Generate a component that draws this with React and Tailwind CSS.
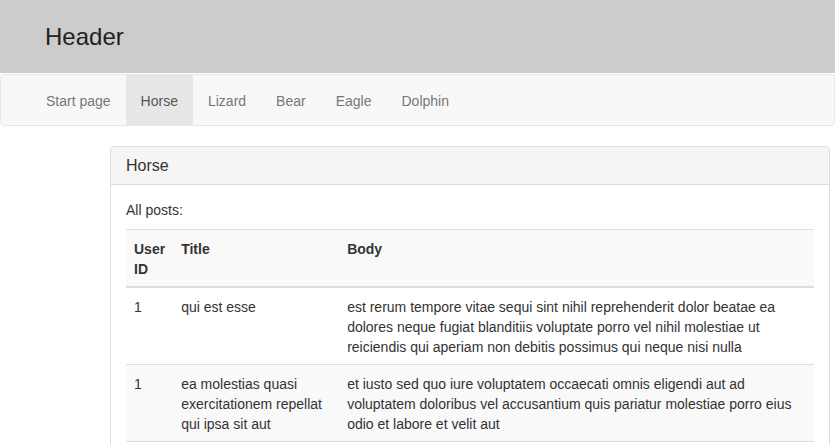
const NAV = ['Start page', 'Horse', 'Lizard', 'Bear', 'Eagle', 'Dolphin'];

const POSTS = [
  {
    userId: 1,
    title: 'qui est esse',
    body: 'est rerum tempore vitae sequi sint nihil reprehenderit dolor beatae ea dolores neque fugiat blanditiis voluptate porro vel nihil molestiae ut reiciendis qui aperiam non debitis possimus qui neque nisi nulla',
  },
  {
    userId: 1,
    title: 'ea molestias quasi exercitationem repellat qui ipsa sit aut',
    body: 'et iusto sed quo iure voluptatem occaecati omnis eligendi aut ad voluptatem doloribus vel accusantium quis pariatur molestiae porro eius odio et labore et velit aut',
  },
];

const App = () => {
  const active = 'Horse';

  return (
    <div className="min-h-screen bg-white text-[14px] leading-[20px] text-[#333] font-['Liberation_Sans',Arial,sans-serif]">
      <div className="h-[73px] bg-[#cccccc] flex items-center pl-[45px]">
        <h1 className="text-[24px] leading-[26px] text-[#222]">Header</h1>
      </div>

      <nav className="border border-[#e7e7e7] bg-[#f8f8f8] rounded-[4px] pl-[30px] mt-[1px]">
        <ul className="flex">
          {NAV.map((item) => (
            <li key={item}>
              <a
                href="#"
                className={`block px-[15px] pt-[16px] pb-[14px] ${
                  item === active ? 'bg-[#e7e7e7] text-[#555]' : 'text-[#777]'
                }`}
              >
                {item}
              </a>
            </li>
          ))}
        </ul>
      </nav>

      <div className="mt-[20px] ml-[110px] w-[720px] border border-[#dddddd] rounded-[4px]">
        <div className="bg-[#f5f5f5] border-b border-[#dddddd] rounded-t-[4px] px-[15px] pt-[10px] pb-[9px]">
          <h3 className="text-[16px] leading-[18px] text-[#333]">Horse</h3>
        </div>
        <div className="p-[15px]">
          <p className="mb-[9px]">All posts:</p>
          <table className="w-full border-collapse text-left">
            <thead>
              <tr className="bg-[#f9f9f9] border-t border-[#dddddd]">
                <th className="px-[8px] pt-[9px] pb-[7px] w-[47px] align-top font-bold border-b-2 border-[#dddddd]">User ID</th>
                <th className="px-[8px] pt-[9px] pb-[7px] w-[166px] align-top font-bold border-b-2 border-[#dddddd]">Title</th>
                <th className="px-[8px] pt-[9px] pb-[7px] align-top font-bold border-b-2 border-[#dddddd]">Body</th>
              </tr>
            </thead>
            <tbody>
              {POSTS.map((post, index) => (
                <tr key={index} className={`border-t border-b border-[#dddddd] ${index % 2 === 1 ? 'bg-[#f9f9f9]' : ''}`}>
                  <td className="px-[8px] pt-[9px] pb-[7px] align-top">{post.userId}</td>
                  <td className="px-[8px] pt-[9px] pb-[7px] align-top">{post.title}</td>
                  <td className="px-[8px] pt-[9px] pb-[7px] align-top">{post.body}</td>
                </tr>
              ))}
            </tbody>
          </table>
        </div>
      </div>
    </div>
  );
};

export default App;
